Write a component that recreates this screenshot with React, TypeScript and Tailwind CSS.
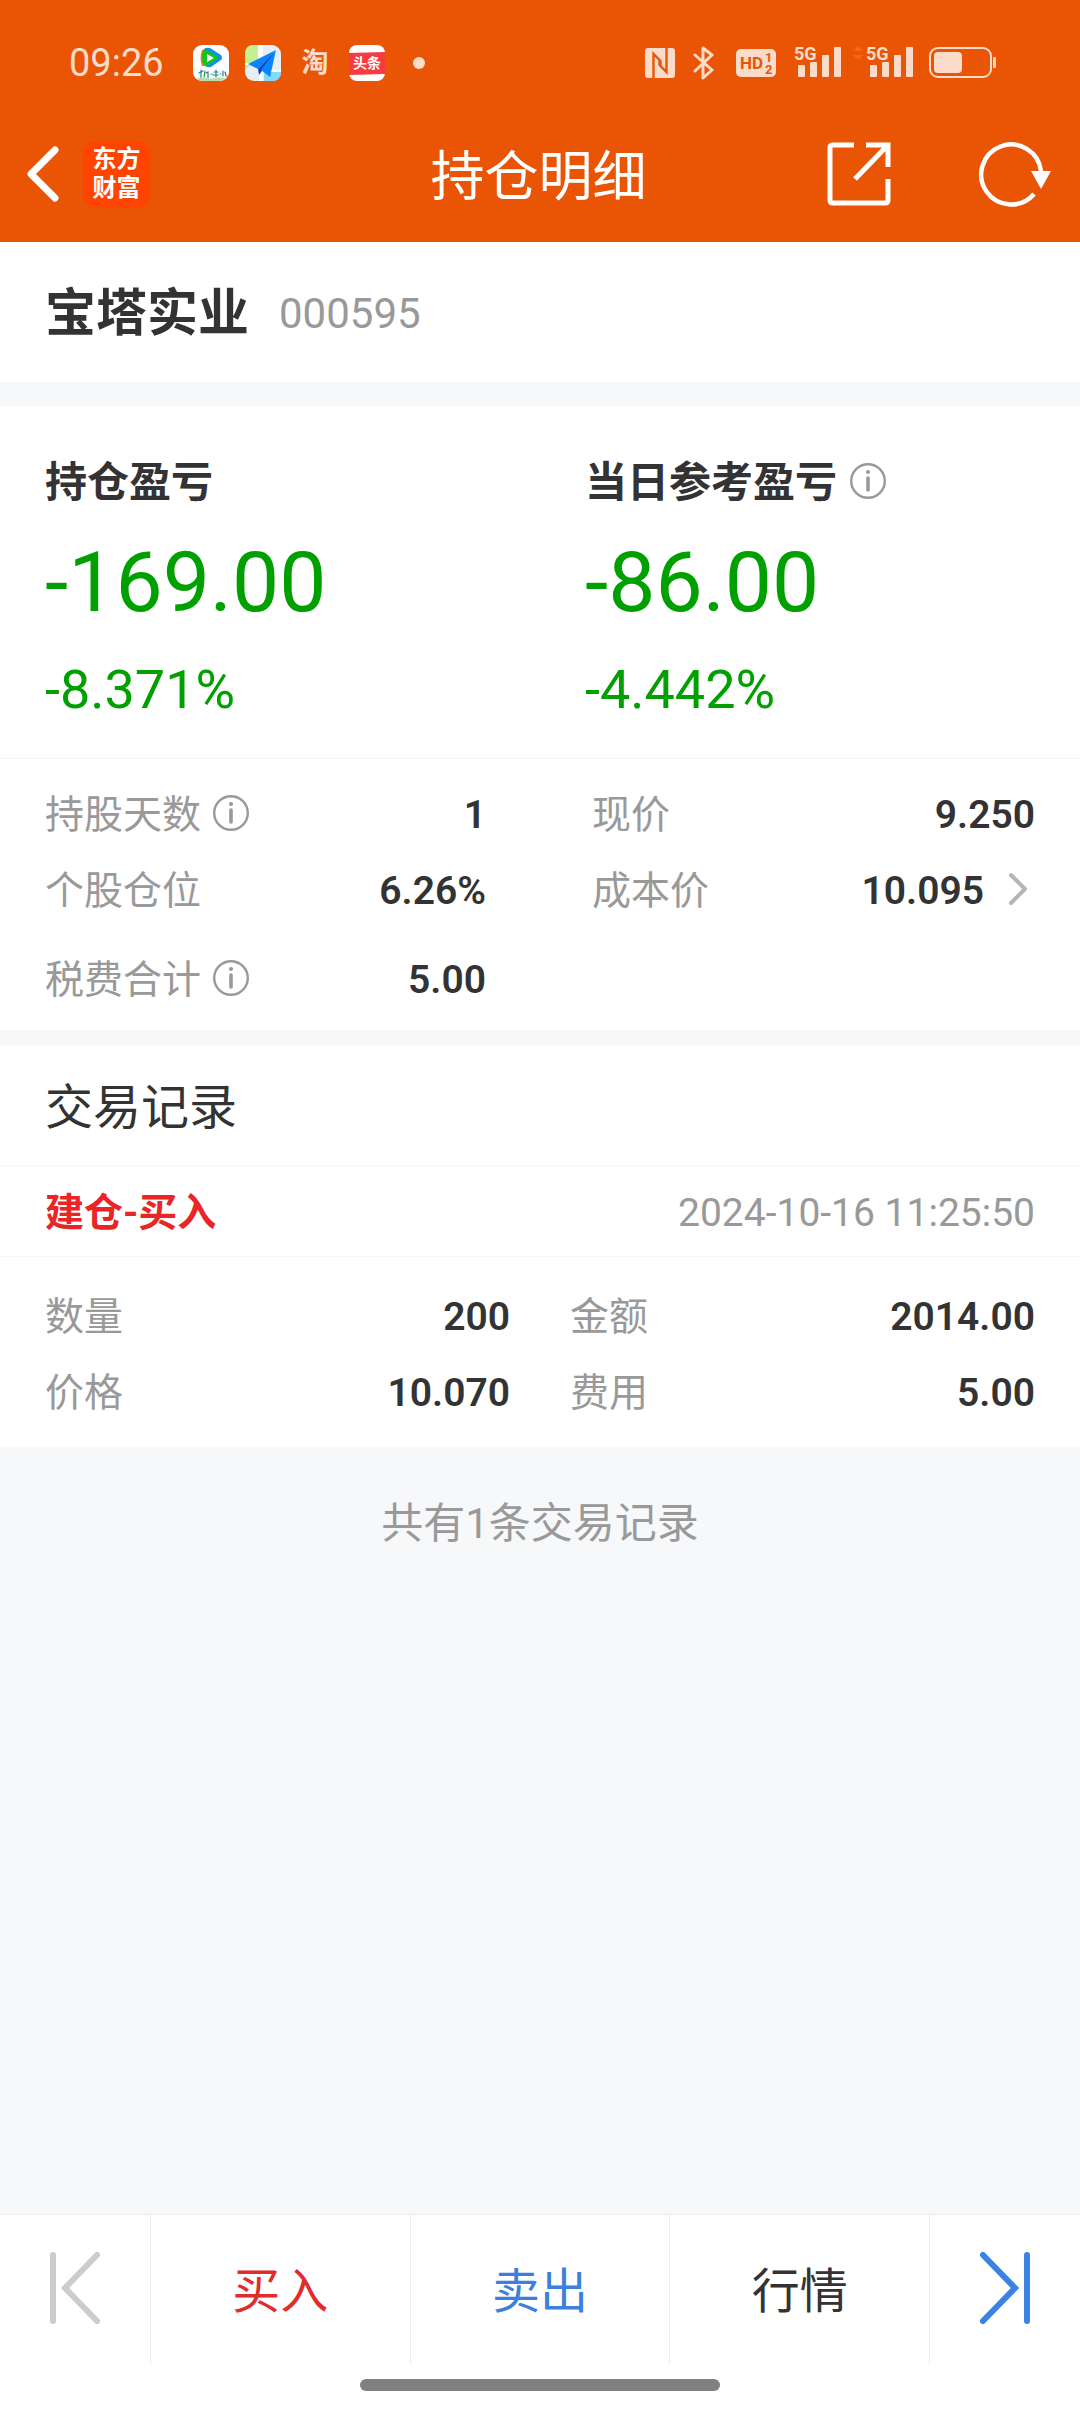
import type { ReactNode } from 'react'

interface FieldItem {
  label: string
  value: string
  info?: boolean
  arrow?: boolean
}

interface ProfitBlockProps {
  title: string
  amount: string
  percent: string
  info?: boolean
}

const POSITION_ROWS: FieldItem[][] = [
  [
    { label: '持股天数', value: '1', info: true },
    { label: '现价', value: '9.250' },
  ],
  [
    { label: '个股仓位', value: '6.26%' },
    { label: '成本价', value: '10.095', arrow: true },
  ],
]

const RECORD_ROWS: FieldItem[][] = [
  [
    { label: '数量', value: '200' },
    { label: '金额', value: '2014.00' },
  ],
  [
    { label: '价格', value: '10.070' },
    { label: '费用', value: '5.00' },
  ],
]

function SignalIcon({ active }: { active?: boolean }) {
  return (
    <svg viewBox="0 0 60 42" className="w-[60px] h-[42px] overflow-visible" fill="#fbdccb" aria-hidden="true">
      {active && (
        <g fill="#f0691f">
          <path d="M0 9l5-5 5 5z" />
          <path d="M0 13h10l-5 5z" />
        </g>
      )}
      <text x="13" y="18" fontSize="18" fontWeight="700">
        5G
      </text>
      <rect x="17" y="23" width="7" height="12" rx="1" />
      <rect x="29" y="20" width="7" height="15" rx="1" />
      <rect x="41" y="13" width="7" height="22" rx="1" />
      <rect x="53" y="5" width="7" height="30" rx="1" />
    </svg>
  )
}

function StatusBar() {
  return (
    <div className="flex items-center justify-between h-[126px] pl-[69px] pr-[84px] text-[#fbdccb]">
      <div className="flex items-center">
        <time className="w-[124px] text-[38px] leading-none">09:26</time>
        <svg viewBox="0 0 36 36" className="size-9 mr-4" aria-hidden="true">
          <rect width="36" height="36" rx="9" fill="#fff" />
          <path d="M9 5q-3 8 0 16l4 0V4z" fill="#ff7a1a" />
          <path d="M11 4q2-2 6-1l11 7q2 3 0 5l-10 7q-5 1-6-2-3-8-1-16z" fill="#0f93e6" />
          <path d="M10 6q2-2 5 0l9 5q1 2 0 3l-9 6q-4 2-5-1-2-7 0-13z" fill="#16c41e" />
          <path d="M14 9l7 4-7 4z" fill="#fff" />
          <g fill="none" stroke="#22877f" strokeWidth="1.2" strokeLinecap="round">
            <path d="M6 28l4-2M8 25v8M12 26l-1 6M13 28l2-1v6M18 29h1" />
            <path d="M21 27h4M23 25v7M20 30h5M27 29h1M30 26v5M32 27l1 4h1" />
          </g>
          <path d="M4 33q5-1 9 0t9 0 11 0q-3 3-7 3H9q-3 0-5-3z" fill="#b4dcb0" />
        </svg>
        <svg viewBox="0 0 36 36" className="size-9 mr-4" aria-hidden="true">
          <rect width="36" height="36" rx="9" fill="#e8eef5" />
          <path d="M0 9q0-9 9-9h4v14L0 25z" fill="#c4f092" />
          <path d="M19 26h17v1q0 9-9 9h-8z" fill="#7fdcff" />
          <path d="M13 0h5v36h-4V20H0v-2h13zM18 25h18v2H18z" fill="#fff" />
          <path d="M31 5L3 19l10 5z" fill="#0a84ff" />
          <path d="M31 5L13 24l1 6 3-4z" fill="#0546c8" />
          <path d="M31 5L16 25l9 7z" fill="#0a84ff" />
        </svg>
        <span className="w-9 mr-4 text-center text-[27px] leading-none font-bold">淘</span>
        <svg viewBox="0 0 36 36" className="size-9 mr-7" aria-hidden="true">
          <rect width="36" height="36" rx="8" fill="#fff" />
          <path d="M0 8l36-1v22L0 30z" fill="#f73b3f" />
          <text x="18" y="23" fontSize="14" fontWeight="700" textAnchor="middle" fill="#fff">
            头条
          </text>
        </svg>
        <span className="size-3 rounded-full bg-[#fbdccb]" />
      </div>

      <div className="flex items-center">
        <svg viewBox="0 0 30 30" className="w-[30px] h-[30px] mr-[18px]" aria-hidden="true">
          <rect width="30" height="30" rx="3" fill="#fbdccb" />
          <path
            d="M8.5 30V6l7 7v5M21.5 0v24l-7-7v-5"
            fill="none"
            stroke="#e95504"
            strokeWidth="2.4"
          />
        </svg>
        <svg viewBox="0 0 22 34" className="w-[22px] h-[34px] mr-[21px]" aria-hidden="true">
          <path
            d="M2 9l17 15-9 8V2l9 7L2 25"
            fill="none"
            stroke="#fbdccb"
            strokeWidth="3"
            strokeLinecap="round"
            strokeLinejoin="round"
          />
        </svg>
        <svg viewBox="0 0 40 28" className="w-10 h-7 mr-[5px]" fill="#e95504" aria-hidden="true">
          <rect width="40" height="28" rx="5" fill="#fbdccb" />
          <text x="4" y="20" fontSize="17" fontWeight="700">
            HD
          </text>
          <text x="29" y="13" fontSize="13" fontWeight="700">
            1
          </text>
          <text x="29" y="25" fontSize="13" fontWeight="700">
            2
          </text>
        </svg>
        <div className="flex gap-3 mr-4">
          <SignalIcon />
          <SignalIcon active />
        </div>
        <svg viewBox="0 0 67 32" className="w-[67px] h-8" aria-hidden="true">
          <rect x="1" y="1" width="61" height="29" rx="8" fill="none" stroke="#fbdccb" strokeWidth="2" />
          <rect x="5" y="5" width="28" height="21" rx="4" fill="#fbdccb" />
          <rect x="64" y="10" width="3" height="11" rx="1" fill="#fbdccb" />
        </svg>
      </div>
    </div>
  )
}

function TitleBar() {
  return (
    <div className="grid grid-cols-[1fr_auto_1fr] items-center h-[116px] pb-[20px] pl-[26px] pr-[29px] text-white">
      <div className="flex items-center gap-[24px]">
        <button aria-label="返回">
          <svg viewBox="0 0 33 56" className="w-[33px] h-14" aria-hidden="true">
            <path
              d="M29 4L5 28l24 24"
              fill="none"
              stroke="currentColor"
              strokeWidth="7"
              strokeLinecap="round"
              strokeLinejoin="round"
            />
          </svg>
        </button>
        <div className="flex flex-col items-center justify-center size-[67px] rounded-[14px] bg-[#ff4400] text-[24px] leading-[29px] font-bold">
          <span>东方</span>
          <span>财富</span>
        </div>
      </div>
      <h1 className="pt-2 text-[54px] leading-[60px]">持仓明细</h1>
      <div className="flex items-center justify-end gap-[88px]">
        <button aria-label="分享">
          <svg viewBox="0 0 64 64" className="size-16" fill="none" stroke="currentColor" strokeWidth="5" aria-hidden="true">
            <path d="M27 3H6q-3 0-3 3v52q0 3 3 3h52q3 0 3-3V37" />
            <path d="M39 3h22v22M60 4L28 37" />
          </svg>
        </button>
        <button aria-label="刷新">
          <svg viewBox="0 0 72 66" className="w-[72px] h-[66px]" aria-hidden="true">
            <path d="M55 53A30 30 0 1 1 62 30" fill="none" stroke="currentColor" strokeWidth="4.5" />
            <path d="M52 30h20l-10 18z" fill="currentColor" />
          </svg>
        </button>
      </div>
    </div>
  )
}

function InfoButton({ label }: { label: string }) {
  return (
    <button aria-label={`${label}说明`} className="pb-1 text-[#999]">
      <svg viewBox="0 0 36 36" className="size-9" aria-hidden="true">
        <circle cx="18" cy="18" r="16.8" fill="none" stroke="currentColor" strokeWidth="2.4" />
        <circle cx="18" cy="9" r="2.1" fill="currentColor" />
        <path d="M18 15v12" stroke="currentColor" strokeWidth="3.6" strokeLinecap="round" />
      </svg>
    </button>
  )
}

function ProfitBlock({ title, amount, percent, info }: ProfitBlockProps) {
  return (
    <div className="pl-[45px]">
      <h2 className="flex items-center gap-[13px] text-[42px] leading-[60px] font-bold">
        {title}
        {info && <InfoButton label={title} />}
      </h2>
      <p className="mt-5 text-[84px] leading-[100px] text-[#00a000]">{amount}</p>
      <p className="mt-[27px] text-[54px] leading-[60px] text-[#00a000]">{percent}</p>
    </div>
  )
}

function Field({ item }: { item: FieldItem }) {
  return (
    <div className="flex items-center justify-between text-[39px] leading-[60px]">
      <dt className="flex items-center gap-3 text-[#999]">
        {item.label}
        {item.info && <InfoButton label={item.label} />}
      </dt>
      <dd className="flex items-center gap-6 font-semibold">
        {item.value}
        {item.arrow && (
          <button aria-label="成本价明细" className="pb-1">
            <svg viewBox="0 0 27 34" className="w-[27px] h-[34px]" aria-hidden="true">
              <path
                d="M3 3l14 14L3 31"
                fill="none"
                stroke="#b5b5b5"
                strokeWidth="4"
                strokeLinecap="round"
                strokeLinejoin="round"
              />
            </svg>
          </button>
        )}
      </dd>
    </div>
  )
}

function TabButton({ className, children }: { className: string; children: ReactNode }) {
  return (
    <button className={`flex-1 pt-1 border-r border-[#eee] text-[48px] leading-[60px] ${className}`}>
      {children}
    </button>
  )
}

export default function App() {
  return (
    <div className="flex flex-col w-full min-h-screen bg-[#f7f8fa] text-[#333] font-[Roboto,'Noto_Sans_CJK_SC',sans-serif]">
      <header className="bg-[#e95504]">
        <StatusBar />
        <TitleBar />
      </header>

      <main className="flex-1">
        <section className="flex items-center gap-[30px] h-[140px] pt-1 px-[45px] bg-white">
          <span className="text-[51px] leading-[60px] font-bold">宝塔实业</span>
          <span className="text-[42px] leading-[60px] text-[#999]">000595</span>
        </section>

        <section className="mt-6 bg-white">
          <div className="grid grid-cols-2 pt-[47px] pb-[38px] border-b border-[#f5f5f5]">
            <ProfitBlock title="持仓盈亏" amount="-169.00" percent="-8.371%" />
            <ProfitBlock title="当日参考盈亏" amount="-86.00" percent="-4.442%" info />
          </div>
          <dl className="grid grid-cols-[441fr_443fr] gap-x-[106px] gap-y-4 px-[45px] pt-[26px]">
            {POSITION_ROWS.flat().map((item) => (
              <Field key={item.label} item={item} />
            ))}
          </dl>
          <dl className="grid grid-cols-[441fr_443fr] gap-x-[106px] px-[45px] pt-[29px] pb-5">
            <Field item={{ label: '税费合计', value: '5.00', info: true }} />
          </dl>
        </section>

        <section className="mt-[15px] bg-white">
          <h2 className="h-[121px] px-[45px] border-b border-[#f5f5f5] text-[48px] leading-[125px]">
            交易记录
          </h2>
          <div className="flex items-center justify-between h-[91px] pt-1 px-[45px] border-b border-[#f5f5f5] text-[39px] leading-[60px]">
            <span className="font-bold text-[#e92525]">建仓-买入</span>
            <time className="text-[#999]">2024-10-16 11:25:50</time>
          </div>
          <dl className="grid grid-cols-2 gap-x-[60px] gap-y-4 px-[45px] pt-[30px] pb-6">
            {RECORD_ROWS.flat().map((item) => (
              <Field key={item.label} item={item} />
            ))}
          </dl>
        </section>

        <p className="pt-[47px] text-center text-[42px] leading-[60px] text-[#999]">
          共有1条交易记录
        </p>
      </main>

      <footer className="border-t border-[#eee] bg-white">
        <nav className="flex h-[149px]">
          <button aria-label="上一只" className="flex items-center justify-center w-[151px] pb-1 border-r border-[#eee]">
            <svg viewBox="0 0 50 72" className="w-[50px] h-[72px]" fill="none" stroke="#ccc" strokeWidth="6" strokeLinecap="round" aria-hidden="true">
              <path d="M3 3v66M47 3L15 36l32 33" />
            </svg>
          </button>
          <TabButton className="text-[#e02c2c]">买入</TabButton>
          <TabButton className="text-[#3a80dc]">卖出</TabButton>
          <TabButton className="text-[#333]">行情</TabButton>
          <button aria-label="下一只" className="flex items-center justify-center w-[150px] pb-1">
            <svg viewBox="0 0 50 72" className="w-[50px] h-[72px]" fill="none" stroke="#3a83e2" strokeWidth="6" strokeLinecap="round" aria-hidden="true">
              <path d="M47 3v66M3 3l32 33L3 69" />
            </svg>
          </button>
        </nav>
        <div className="flex justify-center pt-[15px] pb-[21px]">
          <div className="w-1/3 h-3 rounded-full bg-[#808080]" />
        </div>
      </footer>
    </div>
  )
}
